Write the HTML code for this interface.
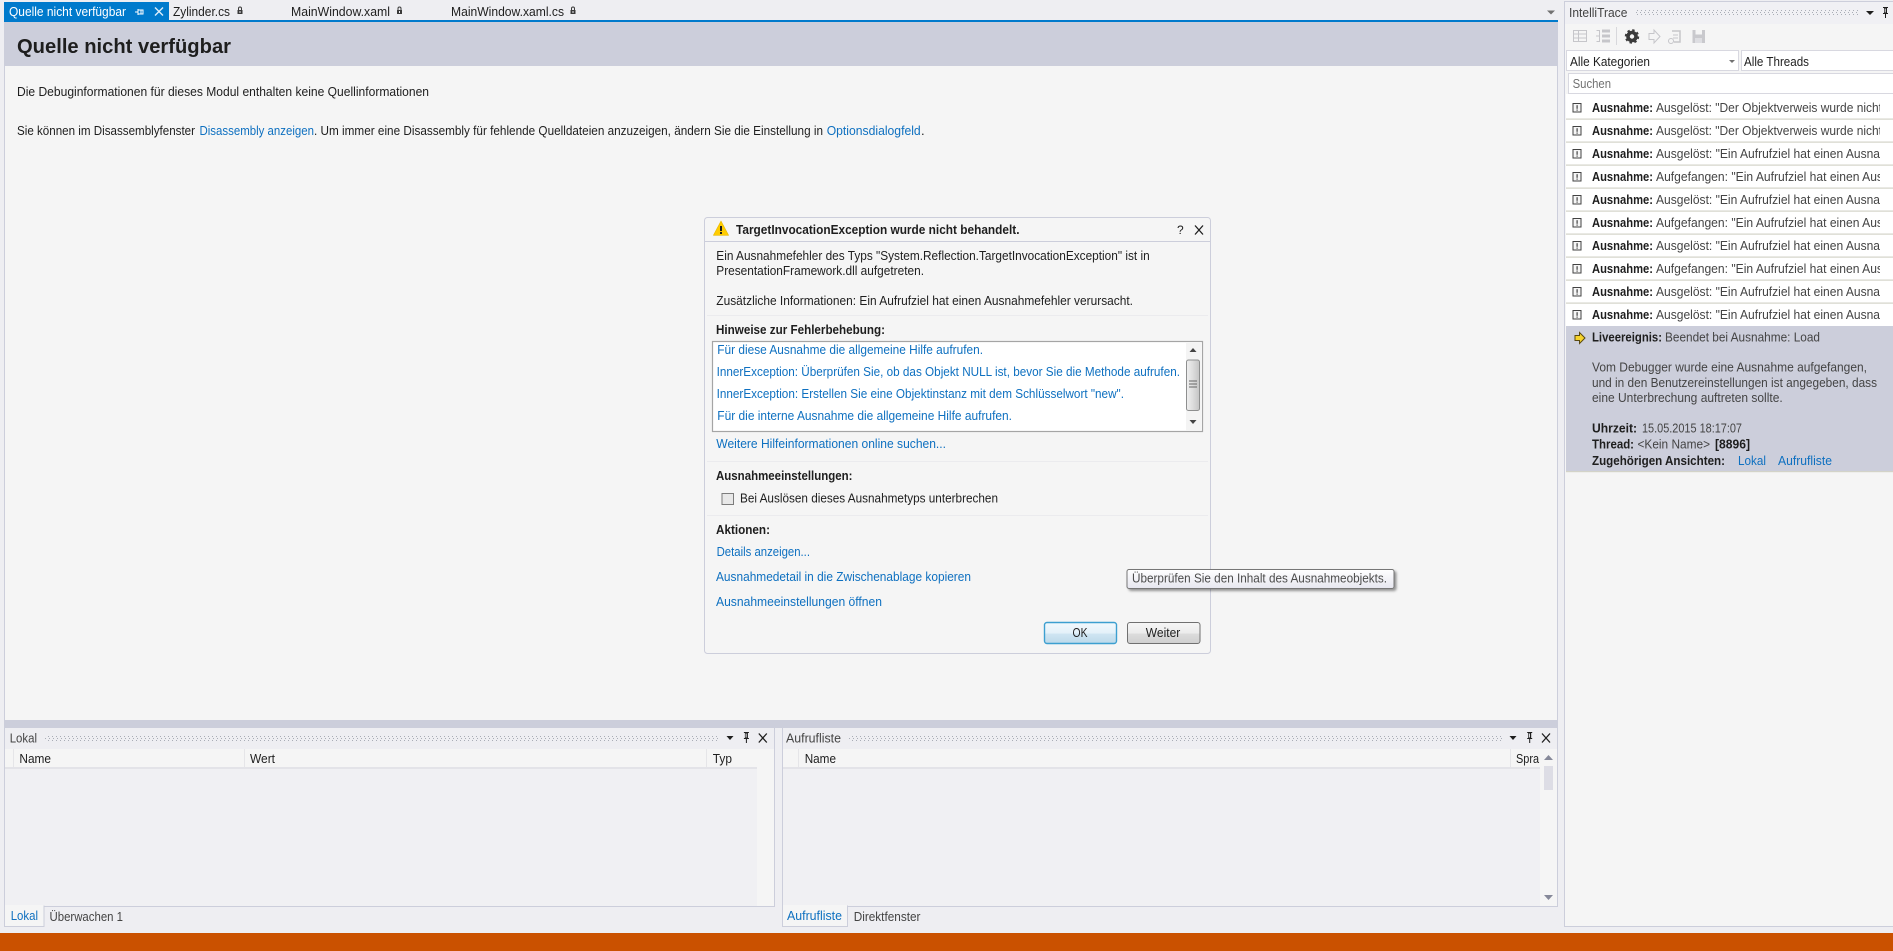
<!DOCTYPE html>
<html lang="de"><head><meta charset="utf-8"><title>Quelle nicht verfügbar</title>
<style>
html,body{margin:0;padding:0;background:#eeeef2;overflow:hidden}
svg{display:block}
text{font-family:"Liberation Sans",Arial,sans-serif;font-size:13px;fill:#1e1e1e;white-space:pre}
.b{font-weight:bold}
.l{fill:#0e70c0}
.g{fill:#444}
</style></head><body>
<svg xmlns="http://www.w3.org/2000/svg" width="1893" height="951" viewBox="0 0 1893 951">
<defs>
<pattern id="grip" width="4" height="4" patternUnits="userSpaceOnUse"><rect x="0" y="0" width="1" height="1" fill="#a9adb6"/><rect x="1" y="2" width="1" height="1" fill="#a9adb6"/></pattern>
<clipPath id="rc"><rect x="1590" y="93" width="290" height="233"/></clipPath>
<linearGradient id="ok" x1="0" y1="0" x2="0" y2="1"><stop offset="0" stop-color="#f2f9fd"/><stop offset=".5" stop-color="#e4f1f9"/><stop offset=".55" stop-color="#cfe5f2"/><stop offset="1" stop-color="#bcd9ea"/></linearGradient>
<linearGradient id="we" x1="0" y1="0" x2="0" y2="1"><stop offset="0" stop-color="#f6f6f6"/><stop offset=".5" stop-color="#ececec"/><stop offset=".55" stop-color="#dcdcdc"/><stop offset="1" stop-color="#cfcfcf"/></linearGradient>
<linearGradient id="th" x1="0" y1="0" x2="1" y2="0"><stop offset="0" stop-color="#f0f0f0"/><stop offset=".5" stop-color="#dcdcdc"/><stop offset="1" stop-color="#c4c4c4"/></linearGradient>
<linearGradient id="tt" x1="0" y1="0" x2="0" y2="1"><stop offset="0" stop-color="#ffffff"/><stop offset="1" stop-color="#e6e6ef"/></linearGradient>
<filter id="sh" x="-5%" y="-20%" width="110%" height="160%"><feDropShadow dx="2" dy="2" stdDeviation="1.2" flood-color="#000" flood-opacity=".4"/></filter>
<g id="lock"><rect x="-2.5" y="-1" width="5" height="4" fill="#3a3a3a"/><path d="M-1.5-1v-1.5a1.5 1.5 0 0 1 3 0V-1" fill="none" stroke="#3a3a3a"/><rect x="-.5" y="0" width="1" height="2" fill="#eeeef2"/></g>
<g id="pin"><path d="M-2.5-6h5v1h-1v5h1v1h-5v-1h1v-5h-1zM-.5 1h1v4h-1z" fill="#1e1e1e"/><rect x="-.8" y="-4.5" width="1" height="4" fill="#eeeef2"/></g>
<g id="rowi"><rect x=".5" y=".5" width="8" height="8.5" fill="#f6f6f6" stroke="#424242"/><rect x="4" y="2.2" width="1.2" height="3.6" fill="#424242"/><rect x="4" y="6.5" width="1.2" height="1.2" fill="#424242"/></g>
<g id="x"><path d="M-4-4.5L4 4.5M4-4.5L-4 4.5" stroke="#1e1e1e" stroke-width="1.3" fill="none"/></g>
</defs>

<rect width="1893" height="951" fill="#eeeef2"/>

<!-- tab strip -->
<rect x="4" y="2" width="165" height="18" fill="#007acc"/>
<rect x="4" y="20" width="1554" height="2" fill="#007acc"/>
<text x="9" y="16" textLength="117" lengthAdjust="spacingAndGlyphs" style="fill:#fff">Quelle nicht verfügbar</text>
<path d="M138 9v6M138 12h-3M138 10h5v4h-5M141 10v4" stroke="#fff" fill="none"/>
<path d="M155 7.5l8 8M163 7.5l-8 8" stroke="#dceefa" stroke-width="1.4"/>
<text x="173" y="16" textLength="57" lengthAdjust="spacingAndGlyphs">Zylinder.cs</text>
<use href="#lock" x="240" y="11"/>
<text x="291" y="16" textLength="99" lengthAdjust="spacingAndGlyphs">MainWindow.xaml</text>
<use href="#lock" x="399.5" y="11"/>
<text x="451" y="16" textLength="113" lengthAdjust="spacingAndGlyphs">MainWindow.xaml.cs</text>
<use href="#lock" x="573" y="11"/>
<path d="M1547 10.5h8l-4 4z" fill="#717171"/>

<!-- document -->
<rect x="4" y="22" width="1554" height="698" fill="#f5f5f5"/>
<rect x="4" y="22" width="1" height="698" fill="#cccedb"/>
<rect x="1557" y="22" width="1" height="698" fill="#cccedb"/>
<rect x="5" y="22" width="1552" height="44" fill="#cccedb"/>
<text x="17" y="53" class="b" textLength="214" lengthAdjust="spacingAndGlyphs" style="font-size:20px">Quelle nicht verfügbar</text>
<text x="17" y="96" textLength="412" lengthAdjust="spacingAndGlyphs">Die Debuginformationen für dieses Modul enthalten keine Quellinformationen</text>
<text x="17" y="135" textLength="178" lengthAdjust="spacingAndGlyphs">Sie können im Disassemblyfenster</text>
<text x="199.5" y="135" class="l" textLength="114.5" lengthAdjust="spacingAndGlyphs">Disassembly anzeigen</text>
<text x="314" y="135" textLength="509" lengthAdjust="spacingAndGlyphs">. Um immer eine Disassembly für fehlende Quelldateien anzuzeigen, ändern Sie die Einstellung in</text>
<text x="826.7" y="135" class="l" textLength="94" lengthAdjust="spacingAndGlyphs">Optionsdialogfeld</text>
<text x="921" y="135">.</text>

<!-- exception dialog -->
<rect x="704.5" y="217.5" width="506" height="436" rx="3" fill="#f5f5f5" stroke="#cccedb"/>
<rect x="705" y="241" width="505" height="1" fill="#cccedb"/>
<path d="M721 221l7.6 14.3h-15.2z" fill="#ffcc00" stroke="#e8b900" stroke-width=".6" stroke-linejoin="round"/>
<path d="M720 226h2v5h-2zM720 232h2v2h-2z" fill="#1e1e1e"/>
<text x="736" y="234" class="b" textLength="283.5" lengthAdjust="spacingAndGlyphs">TargetInvocationException wurde nicht behandelt.</text>
<text x="1177" y="234" style="font-size:12px">?</text>
<use href="#x" x="1199" y="230"/>
<text x="716.3" y="260" textLength="433.4" lengthAdjust="spacingAndGlyphs">Ein Ausnahmefehler des Typs "System.Reflection.TargetInvocationException" ist in</text>
<text x="716.3" y="275" textLength="207.7" lengthAdjust="spacingAndGlyphs">PresentationFramework.dll aufgetreten.</text>
<text x="716.3" y="305" textLength="416.7" lengthAdjust="spacingAndGlyphs">Zusätzliche Informationen: Ein Aufrufziel hat einen Ausnahmefehler verursacht.</text>
<rect x="707" y="315" width="501" height="1" fill="#ebebee"/>
<text x="716" y="334" class="b" textLength="169" lengthAdjust="spacingAndGlyphs">Hinweise zur Fehlerbehebung:</text>
<rect x="712.5" y="341.5" width="490" height="90" fill="#fff" stroke="#a5a5a5" stroke-width="1.2"/>
<text x="717.3" y="354" class="l" textLength="265.7" lengthAdjust="spacingAndGlyphs">Für diese Ausnahme die allgemeine Hilfe aufrufen.</text>
<text x="716.6" y="376" class="l" textLength="463.4" lengthAdjust="spacingAndGlyphs">InnerException: Überprüfen Sie, ob das Objekt NULL ist, bevor Sie die Methode aufrufen.</text>
<text x="716.6" y="398" class="l" textLength="407.4" lengthAdjust="spacingAndGlyphs">InnerException: Erstellen Sie eine Objektinstanz mit dem Schlüsselwort "new".</text>
<text x="717.3" y="420" class="l" textLength="294.7" lengthAdjust="spacingAndGlyphs">Für die interne Ausnahme die allgemeine Hilfe aufrufen.</text>
<rect x="1186" y="343" width="15" height="88" fill="#f4f4f4"/>
<path d="M1193 348l3.5 4h-7z" fill="#444"/>
<rect x="1186.5" y="360" width="13" height="50.5" rx="2" fill="url(#th)" stroke="#8e8f8f"/>
<path d="M1189 381h8M1189 384h8M1189 387h8" stroke="#666"/>
<path d="M1193 424l-3.5-4h7z" fill="#444"/>
<text x="716.3" y="448" class="l" textLength="229.7" lengthAdjust="spacingAndGlyphs">Weitere Hilfeinformationen online suchen...</text>
<rect x="707" y="461" width="501" height="1" fill="#ebebee"/>
<text x="716" y="480" class="b" textLength="136.5" lengthAdjust="spacingAndGlyphs">Ausnahmeeinstellungen:</text>
<rect x="722" y="493.5" width="11.5" height="11" fill="#e8e8e8" stroke="#7c7c7c"/>
<text x="740" y="502.7" textLength="258" lengthAdjust="spacingAndGlyphs">Bei Auslösen dieses Ausnahmetyps unterbrechen</text>
<rect x="707" y="515" width="501" height="1" fill="#ebebee"/>
<text x="716" y="534" class="b" textLength="54" lengthAdjust="spacingAndGlyphs">Aktionen:</text>
<text x="716.6" y="556" class="l" textLength="93.4" lengthAdjust="spacingAndGlyphs">Details anzeigen...</text>
<text x="716" y="581" class="l" textLength="255" lengthAdjust="spacingAndGlyphs">Ausnahmedetail in die Zwischenablage kopieren</text>
<text x="716" y="606" class="l" textLength="166" lengthAdjust="spacingAndGlyphs">Ausnahmeeinstellungen öffnen</text>
<rect x="1044.5" y="622.5" width="72" height="21" rx="2.5" fill="url(#ok)" stroke="#3c9fd0" stroke-width="1.4"/>
<text x="1072.5" y="637" textLength="15" lengthAdjust="spacingAndGlyphs">OK</text>
<rect x="1127.5" y="622.5" width="72.5" height="21" rx="2.5" fill="url(#we)" stroke="#707070"/>
<text x="1145.8" y="637" textLength="34.5" lengthAdjust="spacingAndGlyphs">Weiter</text>

<!-- tooltip -->
<rect x="1127" y="569.5" width="267" height="19" rx="2" fill="url(#tt)" stroke="#767676" filter="url(#sh)"/>
<text x="1132" y="582.7" textLength="255" lengthAdjust="spacingAndGlyphs" style="fill:#4c4c4c">Überprüfen Sie den Inhalt des Ausnahmeobjekts.</text>

<!-- band -->
<rect x="4" y="720" width="1554" height="8" fill="#cccedb"/>

<!-- Lokal panel -->
<rect x="5" y="728" width="769" height="21" fill="#eeeef2"/>
<rect x="5" y="749" width="769" height="157" fill="#f5f5f5"/>
<rect x="5" y="769" width="752" height="137" fill="#f0f0f3"/>
<rect x="5" y="767" width="752" height="2" fill="#e3e3e8"/>
<rect x="13" y="749" width="1" height="18" fill="#e5e5e8"/><rect x="244" y="749" width="1" height="18" fill="#e5e5e8"/><rect x="706" y="749" width="1" height="18" fill="#e5e5e8"/>
<rect x="4" y="728" width="1" height="179" fill="#cccedb"/><rect x="774" y="728" width="1" height="179" fill="#cccedb"/><rect x="4" y="906" width="771" height="1" fill="#cccedb"/>
<text x="9.7" y="742.7" textLength="27.3" lengthAdjust="spacingAndGlyphs" class="g">Lokal</text>
<rect x="45" y="736" width="673" height="5" fill="url(#grip)"/>
<path d="M726.5 736h7l-3.5 4z" fill="#1e1e1e"/>
<use href="#pin" x="746.4" y="738"/>
<use href="#x" x="762.8" y="738"/>
<text x="19.4" y="763" textLength="31.6" lengthAdjust="spacingAndGlyphs">Name</text>
<text x="250" y="763" textLength="25" lengthAdjust="spacingAndGlyphs">Wert</text>
<text x="712.8" y="763" textLength="19.2" lengthAdjust="spacingAndGlyphs">Typ</text>
<rect x="4.5" y="906" width="39.5" height="20.5" fill="#f5f5f5" stroke="#cccedb"/>
<rect x="5" y="905" width="38.5" height="2" fill="#f5f5f5"/>
<text x="10.7" y="920" textLength="27.3" lengthAdjust="spacingAndGlyphs" class="l">Lokal</text>
<text x="49.5" y="921" textLength="73.5" lengthAdjust="spacingAndGlyphs" class="g">Überwachen 1</text>

<!-- Aufrufliste panel -->
<rect x="783" y="728" width="774" height="21" fill="#eeeef2"/>
<rect x="783" y="749" width="774" height="157" fill="#f5f5f5"/>
<rect x="783" y="769" width="757" height="137" fill="#f0f0f3"/>
<rect x="783" y="767" width="757" height="2" fill="#e3e3e8"/>
<rect x="798" y="749" width="1" height="18" fill="#e5e5e8"/><rect x="1510" y="749" width="1" height="18" fill="#e5e5e8"/>
<rect x="782" y="728" width="1" height="179" fill="#cccedb"/><rect x="1557" y="728" width="1" height="179" fill="#cccedb"/><rect x="782" y="906" width="776" height="1" fill="#cccedb"/>
<text x="786" y="742.7" textLength="55" lengthAdjust="spacingAndGlyphs" class="g">Aufrufliste</text>
<rect x="849" y="736" width="654" height="5" fill="url(#grip)"/>
<path d="M1509.5 736h7l-3.5 4z" fill="#1e1e1e"/>
<use href="#pin" x="1529.7" y="738"/>
<use href="#x" x="1546" y="738"/>
<text x="804.7" y="763" textLength="31.3" lengthAdjust="spacingAndGlyphs">Name</text>
<text x="1516" y="763" textLength="23" lengthAdjust="spacingAndGlyphs">Spra</text>
<path d="M1548.5 755l4.5 5h-9z" fill="#868999"/>
<rect x="1544" y="766" width="9" height="24" fill="#dddde5"/>
<path d="M1548.5 900l-4.5-5h9z" fill="#868999"/>
<rect x="782.5" y="906" width="65" height="20.5" fill="#f5f5f5" stroke="#cccedb"/>
<rect x="783" y="905" width="64" height="2" fill="#f5f5f5"/>
<text x="787" y="920" textLength="55" lengthAdjust="spacingAndGlyphs" class="l">Aufrufliste</text>
<text x="853.7" y="921" textLength="66.8" lengthAdjust="spacingAndGlyphs" class="g">Direktfenster</text>

<!-- IntelliTrace panel -->
<rect x="1564.5" y="1.5" width="340" height="925" fill="#f5f5f5" stroke="#cccedb"/>
<rect x="1565" y="2" width="328" height="22" fill="#f0f0f4"/>
<text x="1569" y="17" textLength="58.4" lengthAdjust="spacingAndGlyphs" class="g">IntelliTrace</text>
<rect x="1636" y="10" width="223" height="5" fill="url(#grip)"/>
<path d="M1866 11h8l-4 4z" fill="#1e1e1e"/>
<use href="#pin" x="1885.5" y="13"/>
<!-- toolbar -->
<g fill="none" stroke="#c6c6ca">
<rect x="1573.5" y="30.5" width="13" height="11"/><path d="M1574 34h12M1574 38h12M1578.5 31v10"/>
<path d="M1596.5 30.5h3v11h-3M1596 36h3"/><path d="M1602 31h8M1602 36h8M1602 41h8" stroke-width="3"/>
</g>
<rect x="1616" y="27" width="1" height="18" fill="#d8d8dc"/>
<circle cx="1632" cy="36.5" r="4" fill="none" stroke="#3a3a3a" stroke-width="3.6"/>
<circle cx="1632" cy="36.5" r="6.2" fill="none" stroke="#3a3a3a" stroke-width="2" stroke-dasharray="2.4 2.47"/>
<path d="M1649 33.5h5v-3.5l6 6.5-6 6.5v-3.5h-5z" fill="none" stroke="#c6c6ca"/>
<path d="M1672 31h8v11h-6" fill="none" stroke="#c6c6ca" stroke-width="1.5"/><path d="M1673 35h5M1673 38h5" stroke="#c6c6ca"/><circle cx="1671" cy="41" r="2.5" fill="none" stroke="#c6c6ca"/>
<path d="M1692.5 30h12.5v13h-12.5z" fill="#c9c9cd"/><rect x="1695.5" y="30" width="6.5" height="4.5" fill="#f5f5f5"/><rect x="1695" y="38" width="7" height="5" fill="#dedee2"/>
<!-- filters -->
<rect x="1566.5" y="50.5" width="172" height="20" fill="#fff" stroke="#d8d8e0"/>
<text x="1570" y="66" textLength="80" lengthAdjust="spacingAndGlyphs">Alle Kategorien</text>
<path d="M1729 60h6l-3 3z" fill="#717171"/>
<rect x="1741.5" y="50.5" width="160" height="20" fill="#fff" stroke="#d8d8e0"/>
<text x="1744" y="66" textLength="65" lengthAdjust="spacingAndGlyphs">Alle Threads</text>
<rect x="1568.5" y="73.5" width="330" height="20" fill="#fff" stroke="#d8d8e0"/>
<text x="1572.6" y="88" textLength="38.4" lengthAdjust="spacingAndGlyphs" style="fill:#717171">Suchen</text>
<!-- rows -->
<rect x="1566" y="94" width="327" height="232" fill="#fff"/>
<g fill="#d3d3c8">
<rect x="1566" y="118.5" width="327" height="1.2"/><rect x="1566" y="141.5" width="327" height="1.2"/><rect x="1566" y="164.5" width="327" height="1.2"/><rect x="1566" y="187.5" width="327" height="1.2"/><rect x="1566" y="210.5" width="327" height="1.2"/><rect x="1566" y="233.5" width="327" height="1.2"/><rect x="1566" y="256.5" width="327" height="1.2"/><rect x="1566" y="279.5" width="327" height="1.2"/><rect x="1566" y="302.5" width="327" height="1.2"/>
</g>
<use href="#rowi" x="1572.5" y="103"/><use href="#rowi" x="1572.5" y="126"/><use href="#rowi" x="1572.5" y="149"/><use href="#rowi" x="1572.5" y="172"/><use href="#rowi" x="1572.5" y="195"/><use href="#rowi" x="1572.5" y="218"/><use href="#rowi" x="1572.5" y="241"/><use href="#rowi" x="1572.5" y="264"/><use href="#rowi" x="1572.5" y="287"/><use href="#rowi" x="1572.5" y="310"/>
<g clip-path="url(#rc)">
<text x="1592" y="112" class="b" textLength="61" lengthAdjust="spacingAndGlyphs">Ausnahme:</text><text x="1656" y="112" textLength="226" lengthAdjust="spacingAndGlyphs" class="g">Ausgelöst: "Der Objektverweis wurde nicht</text>
<text x="1592" y="135" class="b" textLength="61" lengthAdjust="spacingAndGlyphs">Ausnahme:</text><text x="1656" y="135" textLength="226" lengthAdjust="spacingAndGlyphs" class="g">Ausgelöst: "Der Objektverweis wurde nicht</text>
<text x="1592" y="158" class="b" textLength="61" lengthAdjust="spacingAndGlyphs">Ausnahme:</text><text x="1656" y="158" textLength="224" lengthAdjust="spacingAndGlyphs" class="g">Ausgelöst: "Ein Aufrufziel hat einen Ausna</text>
<text x="1592" y="181" class="b" textLength="61" lengthAdjust="spacingAndGlyphs">Ausnahme:</text><text x="1656" y="181" textLength="227" lengthAdjust="spacingAndGlyphs" class="g">Aufgefangen: "Ein Aufrufziel hat einen Aus</text>
<text x="1592" y="204" class="b" textLength="61" lengthAdjust="spacingAndGlyphs">Ausnahme:</text><text x="1656" y="204" textLength="224" lengthAdjust="spacingAndGlyphs" class="g">Ausgelöst: "Ein Aufrufziel hat einen Ausna</text>
<text x="1592" y="227" class="b" textLength="61" lengthAdjust="spacingAndGlyphs">Ausnahme:</text><text x="1656" y="227" textLength="227" lengthAdjust="spacingAndGlyphs" class="g">Aufgefangen: "Ein Aufrufziel hat einen Aus</text>
<text x="1592" y="250" class="b" textLength="61" lengthAdjust="spacingAndGlyphs">Ausnahme:</text><text x="1656" y="250" textLength="224" lengthAdjust="spacingAndGlyphs" class="g">Ausgelöst: "Ein Aufrufziel hat einen Ausna</text>
<text x="1592" y="273" class="b" textLength="61" lengthAdjust="spacingAndGlyphs">Ausnahme:</text><text x="1656" y="273" textLength="227" lengthAdjust="spacingAndGlyphs" class="g">Aufgefangen: "Ein Aufrufziel hat einen Aus</text>
<text x="1592" y="296" class="b" textLength="61" lengthAdjust="spacingAndGlyphs">Ausnahme:</text><text x="1656" y="296" textLength="224" lengthAdjust="spacingAndGlyphs" class="g">Ausgelöst: "Ein Aufrufziel hat einen Ausna</text>
<text x="1592" y="319" class="b" textLength="61" lengthAdjust="spacingAndGlyphs">Ausnahme:</text><text x="1656" y="319" textLength="224" lengthAdjust="spacingAndGlyphs" class="g">Ausgelöst: "Ein Aufrufziel hat einen Ausna</text>
</g>
<!-- selected event -->
<rect x="1566" y="326" width="327" height="145.5" fill="#cccedb"/>
<rect x="1566" y="471" width="327" height="1.2" fill="#d3d3c8"/>
<path d="M1575 335.5h4.5v-3l5.5 5.500-5.500 5.500v-3h-4.500z" fill="#f6d32d" stroke="#5a4a10" stroke-width="1"/>
<text x="1592" y="341.7" class="b" textLength="70" lengthAdjust="spacingAndGlyphs">Liveereignis:</text>
<text x="1665" y="341.7" textLength="155" lengthAdjust="spacingAndGlyphs" class="g">Beendet bei Ausnahme: Load</text>
<text x="1592" y="371.7" textLength="275" lengthAdjust="spacingAndGlyphs" class="g">Vom Debugger wurde eine Ausnahme aufgefangen,</text>
<text x="1592" y="387" textLength="285" lengthAdjust="spacingAndGlyphs" class="g">und in den Benutzereinstellungen ist angegeben, dass</text>
<text x="1592" y="402" textLength="190.7" lengthAdjust="spacingAndGlyphs" class="g">eine Unterbrechung auftreten sollte.</text>
<text x="1592" y="432.7" class="b" textLength="45" lengthAdjust="spacingAndGlyphs">Uhrzeit:</text>
<text x="1642" y="432.7" textLength="100" lengthAdjust="spacingAndGlyphs" class="g">15.05.2015 18:17:07</text>
<text x="1592" y="448.7" class="b" textLength="42" lengthAdjust="spacingAndGlyphs">Thread:</text>
<text x="1637.5" y="448.7" textLength="72.5" lengthAdjust="spacingAndGlyphs" class="g">&lt;Kein Name&gt;</text>
<text x="1715" y="448.7" class="b" textLength="35" lengthAdjust="spacingAndGlyphs">[8896]</text>
<text x="1592" y="465" class="b" textLength="133" lengthAdjust="spacingAndGlyphs">Zugehörigen Ansichten:</text>
<text x="1738" y="465" class="l" textLength="28" lengthAdjust="spacingAndGlyphs">Lokal</text>
<text x="1778" y="465" class="l" textLength="54" lengthAdjust="spacingAndGlyphs">Aufrufliste</text>

<!-- status bar -->
<rect x="0" y="933" width="1893" height="18" fill="#ca5100"/>
</svg>
</body></html>
